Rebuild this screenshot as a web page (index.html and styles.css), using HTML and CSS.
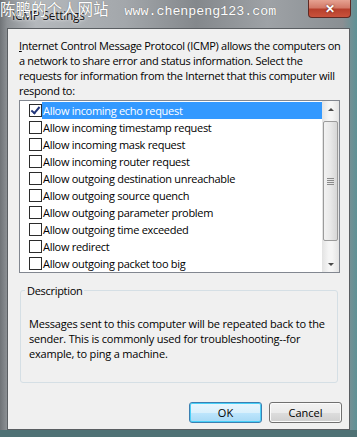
FILE: index.html
```html
<!DOCTYPE html>
<html lang="en">
<head>
    <meta charset="UTF-8">
    <meta name="viewport" content="width=device-width, initial-scale=1.0">
    <title>ICMP Settings</title>
    <link rel="stylesheet" href="styles.css">
</head>
<body>

<div class="window">
    <!-- Title bar -->
    <div class="titlebar">
        <span class="title">ICMP Settings</span>
        <button class="close-btn">&#x2715;</button>
    </div>

    <div class="client">
        <p class="intro"><u>I</u>nternet Control Message Protocol (ICMP) allows the computers on<br>
            a network to share error and status information. Select the<br>
            requests for information from the Internet that this computer will<br>
            respond to:</p>

        <!-- Request list -->
        <div class="listbox">
            <ul class="items">
                <li class="item selected"><span class="check checked"></span><span class="label">Allow incoming echo request</span></li>
                <li class="item"><span class="check"></span><span class="label">Allow incoming timestamp request</span></li>
                <li class="item"><span class="check"></span><span class="label">Allow incoming mask request</span></li>
                <li class="item"><span class="check"></span><span class="label">Allow incoming router request</span></li>
                <li class="item"><span class="check"></span><span class="label">Allow outgoing destination unreachable</span></li>
                <li class="item"><span class="check"></span><span class="label">Allow outgoing source quench</span></li>
                <li class="item"><span class="check"></span><span class="label">Allow outgoing parameter problem</span></li>
                <li class="item"><span class="check"></span><span class="label">Allow outgoing time exceeded</span></li>
                <li class="item"><span class="check"></span><span class="label">Allow redirect</span></li>
                <li class="item"><span class="check"></span><span class="label">Allow outgoing packet too big</span></li>
            </ul>
            <div class="scrollbar">
                <span class="arrow up"></span>
                <div class="track">
                    <div class="thumb"><span class="grip"></span></div>
                </div>
                <span class="arrow down"></span>
            </div>
        </div>

        <!-- Description group -->
        <fieldset class="group">
            <legend>Description</legend>
            <p>Messages sent to this computer will be repeated back to the<br>
                sender. This is commonly used for troubleshooting--for<br>
                example, to ping a machine.</p>
        </fieldset>

        <div class="buttons">
            <button class="btn default">OK</button>
            <button class="btn">Cancel</button>
        </div>
    </div>

    <!-- Site watermark over the title bar -->
    <div class="watermark"><span class="cn">陈鹏的个人网站</span><span class="url">www.chenpeng123.com</span></div>
</div>

</body>
</html>
```

FILE: styles.css
```css
body {
    margin: 0;
    font-family: "Open Sans", Arial, sans-serif;
    font-size: 11px;
    letter-spacing: -0.3px;
    color: #000000;
    background: #ffffff;
}

.window {
    position: relative;
    width: 357px;
    height: 437px;
    box-sizing: border-box;
    padding: 0 7px 7px 7px;
    display: flex;
    flex-direction: column;
    background: linear-gradient(to right, #6f7377 0, #8d9195 2%, #b4b8bc 10%, #a3a7ab 35%, #84888c 55%, #9ea2a6 75%, #8a8f93 96%, #5f9296 100%);
    box-shadow: inset 0 -7px 0 #4f7275;
}

/* Title bar */
.titlebar {
    height: 28px;
    display: flex;
    justify-content: space-between;
    align-items: flex-start;
}

.title {
    margin: 7px 0 0 5px;
    font-size: 12px;
    color: #111;
    text-shadow: 0 0 4px #e8e8e8, 0 0 2px #e8e8e8;
}

.close-btn {
    width: 43px;
    height: 18px;
    margin-right: -1px;
    border: 1px solid #5e2a24;
    border-top: none;
    border-radius: 0 0 4px 4px;
    background: linear-gradient(to bottom, #e6a291 0, #d37a68 45%, #b7402c 55%, #c9523c 100%);
    color: #ffffff;
    font-size: 12px;
    font-weight: bold;
    line-height: 16px;
    padding: 0;
    text-shadow: 0 0 2px #5a1a10;
}

/* Client area */
.client {
    flex: 1;
    display: flex;
    flex-direction: column;
    background: #f0f0f0;
    border: 1px solid #5a5e62;
    padding: 0 6px 0 11px;
}

.intro {
    margin: 9px 0 0 0;
    line-height: 15px;
    white-space: nowrap;
}

.intro u {
    text-decoration: underline;
}

/* List box */
.listbox {
    margin-top: 2px;
    width: 321px;
    height: 173px;
    box-sizing: border-box;
    border: 1px solid #828790;
    background: #ffffff;
    display: flex;
}

.items {
    list-style: none;
    margin: 0;
    padding: 1px 0 0 0;
    flex: 1;
}

.item {
    height: 17px;
    display: flex;
    align-items: center;
    padding-left: 9px;
}

.check {
    width: 11px;
    height: 11px;
    border: 1px solid #2b2b2b;
    background: #ffffff;
    margin-right: 0;
    position: relative;
    flex: none;
}

.check.checked::after {
    content: "";
    position: absolute;
    left: 3px;
    top: 0;
    width: 3px;
    height: 7px;
    border: solid #21357a;
    border-width: 0 2px 2px 0;
    transform: rotate(40deg);
}

.label {
    flex: 1;
    height: 17px;
    line-height: 17px;
    padding-left: 1px;
}

.item.selected .label {
    background: #3399ff;
    color: #ffffff;
}

/* Scroll bar */
.scrollbar {
    width: 17px;
    display: flex;
    flex-direction: column;
    background: linear-gradient(to right, #e3e3e3, #f5f5f5 40%, #f5f5f5 60%, #e3e3e3);
}

.arrow {
    height: 17px;
    display: flex;
    align-items: center;
    justify-content: center;
}

.arrow::after {
    content: "";
    border-left: 3px solid transparent;
    border-right: 3px solid transparent;
}

.arrow.up::after {
    border-bottom: 3px solid #4a4a4a;
}

.arrow.down::after {
    border-top: 3px solid #4a4a4a;
}

.track {
    flex: 1;
    padding: 4px 1px 15px 1px;
    display: flex;
    flex-direction: column;
}

.thumb {
    height: 118px;
    border: 1px solid #9b9b9b;
    border-radius: 2px;
    background: linear-gradient(to right, #f2f2f2, #e8e8e8 50%, #d6d6d6);
    display: flex;
    align-items: center;
    justify-content: center;
}

.grip {
    width: 7px;
    height: 7px;
    background: repeating-linear-gradient(to bottom, #8a8a8a 0, #8a8a8a 1px, transparent 1px, transparent 2px);
}

/* Description group */
.group {
    margin: 10px 0 0 1px;
    width: 318px;
    box-sizing: border-box;
    padding: 18px 8px 21px 8px;
    border: 1px solid #d5dfe5;
    border-radius: 3px;
}

.group legend {
    padding: 0 2px;
    margin-left: -4px;
    line-height: 15px;
}

.group p {
    margin: 0;
    line-height: 15px;
    letter-spacing: -0.2px;
    white-space: nowrap;
}

/* Dialog buttons */
.buttons {
    margin-top: 19px;
    display: flex;
    justify-content: flex-end;
    gap: 7px;
    padding-right: 1px;
}

.btn {
    width: 73px;
    height: 21px;
    font-family: "Open Sans", Arial, sans-serif;
    font-size: 11px;
    padding: 0;
    border: 1px solid #707070;
    border-radius: 3px;
    background: linear-gradient(to bottom, #f2f2f2 0, #ebebeb 50%, #dddddd 51%, #cfcfcf 100%);
    box-shadow: inset 0 0 0 1px #fbfbfb;
    color: #000;
}

.btn.default {
    border-color: #3c7fb1;
    background: linear-gradient(to bottom, #eaf6fd 0, #d9f0fc 50%, #bee6fd 51%, #a7d9f5 100%);
    box-shadow: inset 0 0 0 1px #48d0f8;
}

/* Watermark */
.watermark {
    position: absolute;
    top: 0;
    left: 0;
    line-height: 17px;
    color: #ffffff;
    white-space: nowrap;
    letter-spacing: 0;
    text-shadow: 0 0 1px #606060;
}

.watermark .cn {
    font-family: "Noto Sans CJK SC", sans-serif;
    font-size: 15.5px;
}

.watermark .url {
    margin-left: 16px;
    font-family: "Liberation Mono", monospace;
    font-size: 13.3px;
}
```
